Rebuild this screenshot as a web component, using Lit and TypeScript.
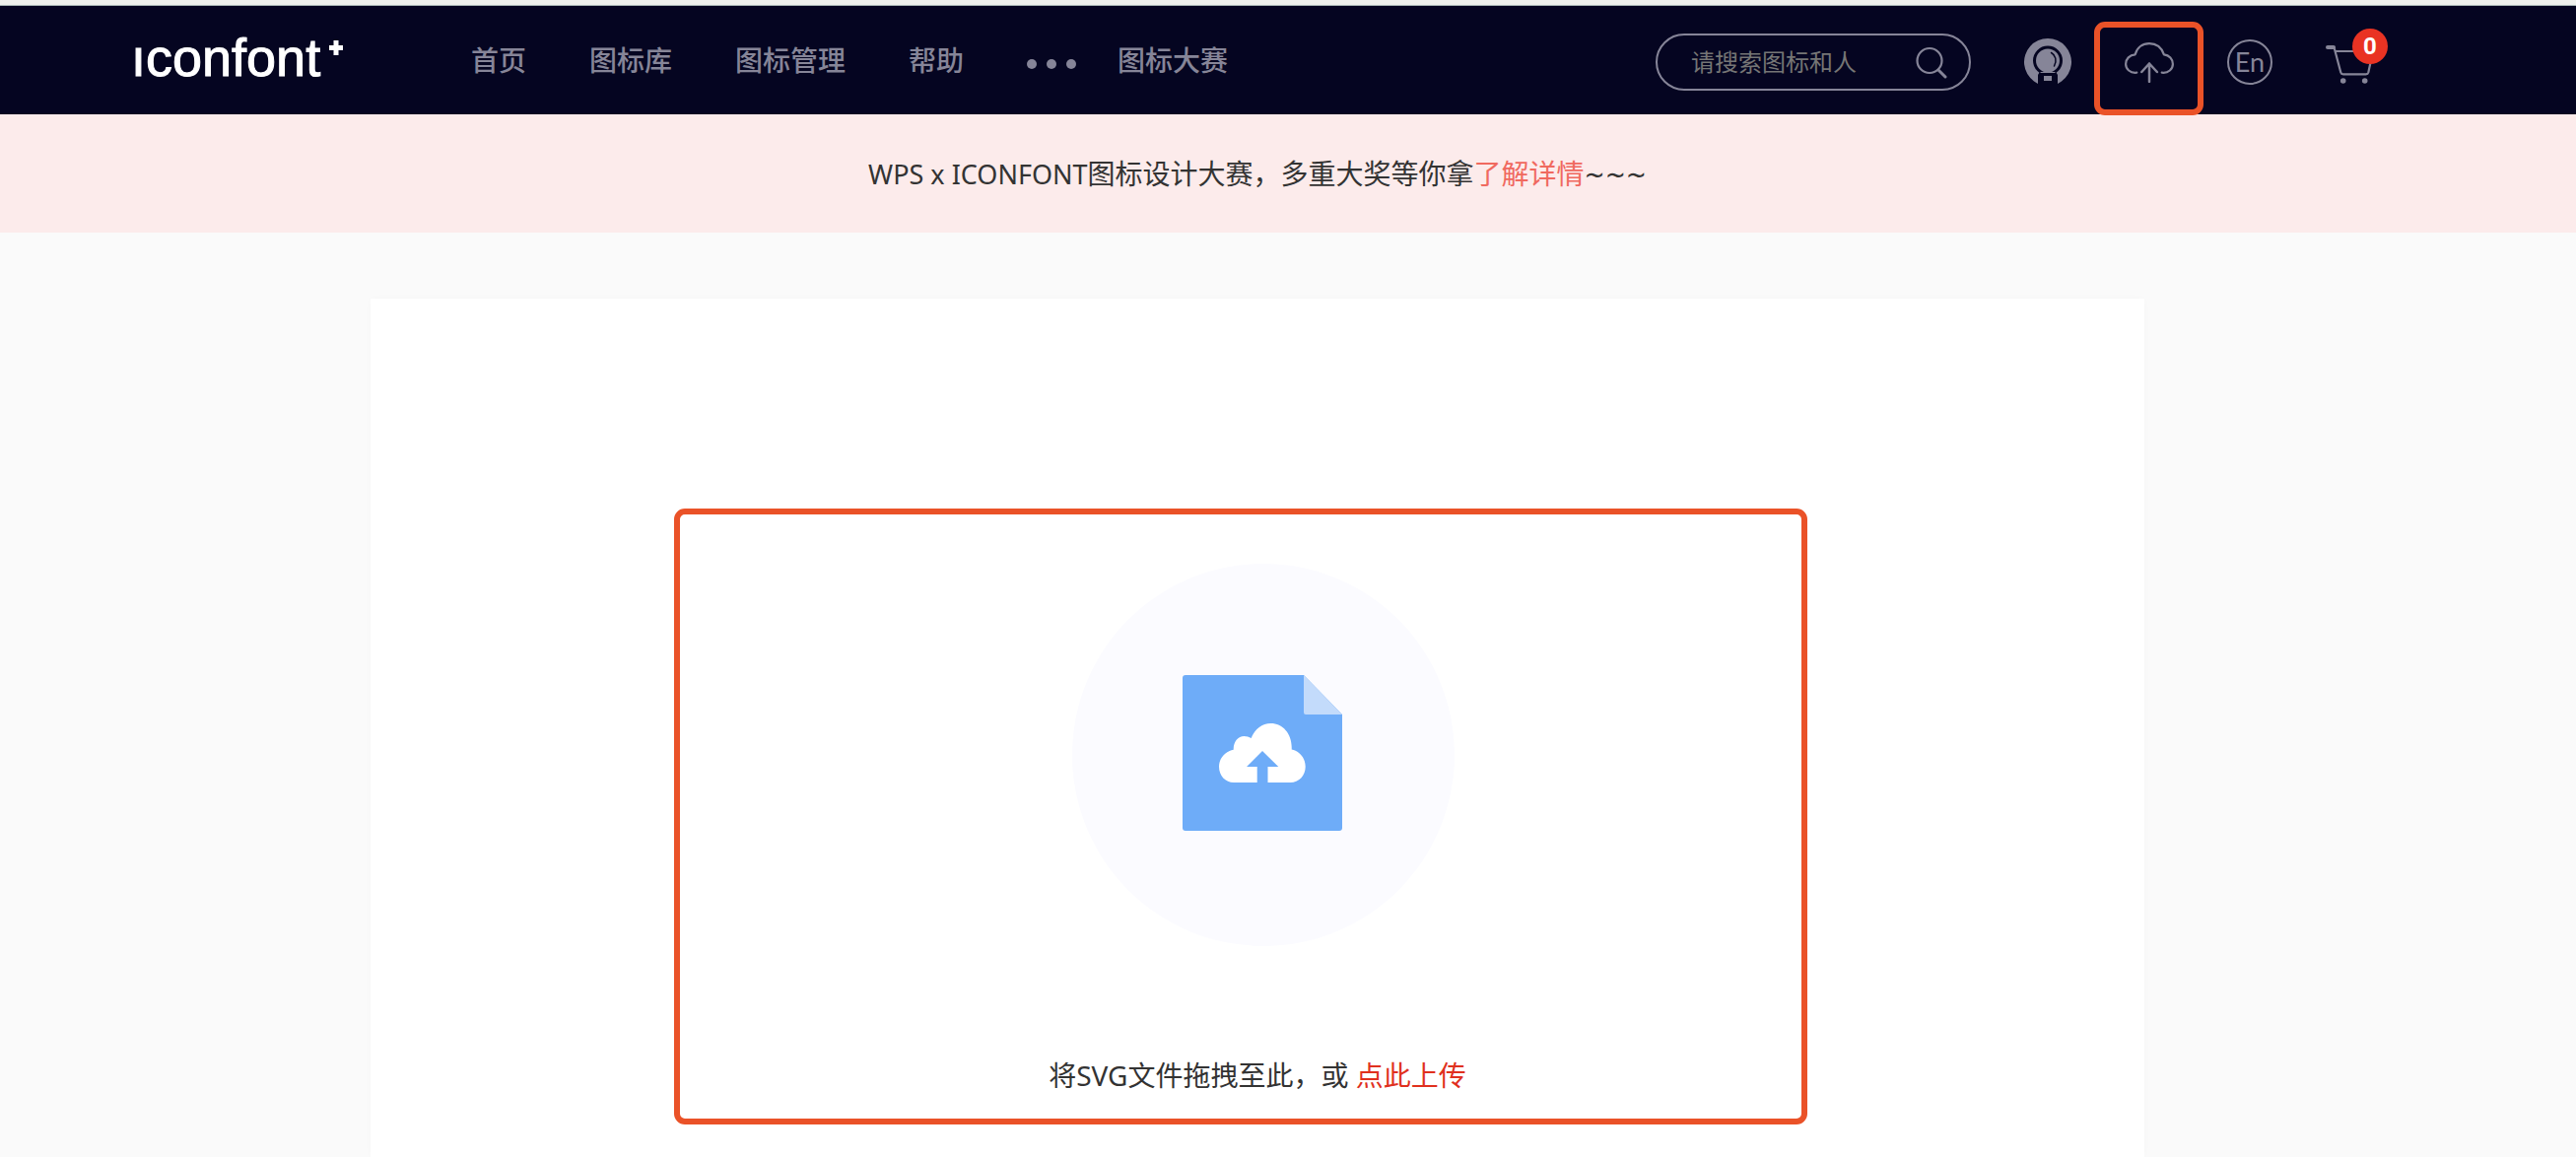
import { LitElement, html, css } from "lit";
import { customElement } from "lit/decorators.js";

@customElement("site-header")
class SiteHeader extends LitElement {
  static styles = css`
    :host {
      display: block;
      background: #050521;
      border-top: 5px solid #eff1ed;
      font-family: "Noto Sans", "Noto Sans CJK SC", sans-serif;
      color: #868598;
    }
    .bar {
      display: flex;
      align-items: center;
      height: 110px;
      padding: 0 190px 0 133px;
      border-top: 1px solid #a9b8b6;
    }
    a,
    button {
      color: inherit;
      text-decoration: none;
      font: inherit;
    }
    button {
      display: block;
      padding: 0;
      border: 0;
      background: none;
      cursor: pointer;
    }
    svg {
      display: block;
      fill: none;
      stroke: currentColor;
      stroke-linecap: round;
      stroke-linejoin: round;
    }
    .logo {
      display: flex;
      gap: 9px;
      flex: 0 0 345px;
      padding-bottom: 6px;
      color: #fff;
      font: 54px/60px "Liberation Sans", sans-serif;
      -webkit-text-stroke: 1px #fff;
    }
    .plus {
      margin-top: 13px;
    }
    .nav,
    .more {
      display: flex;
      align-items: center;
      white-space: nowrap;
    }
    .nav {
      gap: 64px;
      font-size: 28px;
      line-height: 40px;
      font-weight: 500;
    }
    .more {
      gap: 42px;
    }
    .dots {
      padding-top: 8px;
    }
    .dots svg {
      fill: currentColor;
      stroke: none;
    }
    .tools {
      display: flex;
      align-items: center;
      gap: 54px;
      margin-left: auto;
      padding-top: 4px;
    }
    .search {
      display: flex;
      align-items: center;
      box-sizing: border-box;
      width: 320px;
      height: 58px;
      padding: 0 22px 0 34px;
      border: 2px solid #868598;
      border-radius: 29px;
    }
    .field {
      flex: 1;
      min-width: 0;
      padding: 0;
      border: 0;
      outline: 0;
      background: none;
      color: #fff;
      font: inherit;
      font-size: 24px;
      line-height: 36px;
    }
    .field::placeholder {
      color: #757575;
      opacity: 1;
    }
    .upload,
    .cart {
      position: relative;
    }
    .mark {
      position: absolute;
      inset: -21px -30px -33px -31px;
      border: 6px solid #ea5228;
      border-radius: 11px;
    }
    .lang {
      box-sizing: border-box;
      width: 46px;
      height: 46px;
      border: 2px solid #868598;
      border-radius: 50%;
      font: 27px/42px Lato, sans-serif;
      text-align: center;
    }
    .count {
      position: absolute;
      top: 0;
      left: 27px;
      width: 36px;
      height: 36px;
      border-radius: 50%;
      background: #e93323;
      color: #fff;
      font: 700 24px/36px Roboto, sans-serif;
      text-align: center;
    }
  `;

  render() {
    return html`
      <header class="bar">
        <a class="logo" href="#" aria-label="iconfont+">
          <span>ıconfont</span>
          <svg class="plus" width="14" height="15" viewBox="0 0 14 15">
            <path d="M4.500 0h5v5h4.500v5H9.500v5h-5v-5H0V5h4.500z" fill="#fff" stroke="none" />
          </svg>
        </a>
        <nav class="nav">
          <a href="#">首页</a>
          <a href="#">图标库</a>
          <a href="#">图标管理</a>
          <a href="#">帮助</a>
          <div class="more">
            <button class="dots" aria-label="更多">
              <svg width="50" height="12" viewBox="0 0 50 12">
                <circle cx="5" cy="6" r="5" />
                <circle cx="25" cy="6" r="5" />
                <circle cx="45" cy="6" r="5" />
              </svg>
            </button>
            <a href="#">图标大赛</a>
          </div>
        </nav>
        <div class="tools">
          <form class="search" role="search">
            <input class="field" type="text" placeholder="请搜索图标和人" aria-label="请搜索图标和人" />
            <button type="button" aria-label="搜索">
              <svg width="33" height="33" viewBox="0 0 33 33" stroke-width="2.200">
                <circle cx="15" cy="14.500" r="12.500" />
                <path d="M24 24l7 7" stroke-width="3" />
              </svg>
            </button>
          </form>
          <a href="#" aria-label="个人中心">
            <svg width="48" height="48" viewBox="0 0 48 48">
              <path
                d="M10 43.500A24 24 0 1 1 38 43.500L34 46V37l-1.500-2.500h-17L14 37v9z"
                fill="currentColor"
                stroke="none"
              />
              <circle cx="24" cy="22.500" r="15" fill="#050521" stroke="none" />
              <circle cx="24" cy="22.500" r="12" fill="currentColor" stroke="none" />
              <path d="M27.500 14.500c4.500 2.500 6 8 3 13.500" stroke="#050521" stroke-width="1.500" />
              <path d="M17 34.500h14" stroke="currentColor" stroke-width="1.200" />
              <path d="M20 38h8v5h-8z" fill="currentColor" stroke="none" />
            </svg>
          </a>
          <a class="upload" href="#" aria-label="上传">
            <svg width="50" height="41" viewBox="0 0 50 41" stroke-width="2.200">
              <path d="M12.300 30.700C5.500 31.500 1.100 27 1.100 22c0-5.200 3.900-9.200 9.600-9.700C12.500 5.500 18 1.200 25 1.200s12.500 4.300 14.900 11.100c5.300.600 9 4.500 9 9.700 0 5-4.400 9.500-11.200 8.700" />
              <path d="M25 40V21.500M17.300 30L25 21.500l7.900 8.500" stroke-width="2.500" />
            </svg>
            <span class="mark"></span>
          </a>
          <button class="lang">En</button>
          <a class="cart" href="#" aria-label="购物车">
            <svg width="64" height="68" viewBox="0 0 64 68" stroke-width="2.200">
              <path d="M2 19h6" stroke-width="4" />
              <path d="M8.500 19l6.800 25.500q.500 1.800 2.500 1.800h23q2 0 2.500-1.800L48 23M10 23h38" />
              <circle cx="17.700" cy="53" r="2.800" fill="currentColor" stroke="none" />
              <circle cx="39.700" cy="53" r="2.800" fill="currentColor" stroke="none" />
            </svg>
            <span class="count">0</span>
          </a>
        </div>
      </header>
    `;
  }
}

@customElement("upload-card")
class UploadCard extends LitElement {
  static styles = css`
    :host {
      display: block;
      position: relative;
      box-sizing: border-box;
      width: 100%;
      max-width: 1800px;
      padding: 268px 0 40px;
      background: #fff;
      box-shadow: 0 0 8px rgba(0, 0, 0, 0.02);
      color: #333;
      font: 28px/40px "Noto Sans", "Noto Sans CJK SC", sans-serif;
    }
    .drop {
      display: flex;
      flex-direction: column;
      align-items: center;
      gap: 110px;
    }
    .hint {
      margin: 0;
    }
    .pick {
      color: #e0301e;
      text-decoration: none;
    }
    .mark {
      position: absolute;
      top: 213px;
      left: 308px;
      right: 342px;
      height: 613px;
      border: 6px solid #ea5228;
      border-radius: 11px;
      pointer-events: none;
    }
  `;

  render() {
    return html`
      <section class="drop">
        <svg width="402" height="390" viewBox="0 0 402 390" aria-hidden="true">
          <circle cx="207" cy="195" r="194" fill="#fbfbff" />
          <path d="M128 114h120l39 40v115a3 3 0 0 1-3 3H128a3 3 0 0 1-3-3V117a3 3 0 0 1 3-3z" fill="#6eacf8" />
          <path d="M248 114l39 40h-37a2 2 0 0 1-2-2z" fill="#c3dbfb" />
          <path
            d="M177 223c-8.500 0-15-7-15-16 0-8.500 6-15.500 14.700-17.300C176.500 182 181 176 187.500 176c2.500 0 5 .700 7.200 2C198 169 205.500 163 214.500 163c12.500 0 22 11 21.200 26.500C243.500 191 249.700 198 249.700 207c0 9-6.700 16-15.200 16h-23v-16h10.800L206 191l-16 16h10.700v16z"
            fill="#fff"
          />
        </svg>
        <p class="hint">将SVG文件拖拽至此，或 <a class="pick" href="#">点此上传</a></p>
      </section>
      <span class="mark"></span>
    `;
  }
}

@customElement("app-root")
class AppRoot extends LitElement {
  static styles = css`
    :host {
      display: flex;
      flex-direction: column;
      min-height: 100vh;
      background: #fafafa;
    }
    .notice {
      box-sizing: border-box;
      height: 120px;
      margin: 0;
      padding: 40px 62px 40px 0;
      background: #fcebeb;
      color: #333;
      font: 28px/40px "Noto Sans", "Noto Sans CJK SC", sans-serif;
      text-align: center;
    }
    .latin {
      font-size: 27px;
    }
    .waves {
      font-family: "DejaVu Sans Condensed", "DejaVu Sans", sans-serif;
      font-stretch: normal;
    }
    .details {
      color: #f0695f;
      text-decoration: none;
    }
    .main {
      display: flex;
      flex: 1;
      justify-content: center;
      padding: 67px 62px 0 0;
    }
  `;

  render() {
    return html`
      <site-header></site-header>
      <p class="notice">
        <span class="latin">WPS x ICONFONT</span>图标设计大赛，多重大奖等你拿<a class="details" href="#">了解详情</a
        ><span class="waves">~~~</span>
      </p>
      <main class="main"><upload-card></upload-card></main>
    `;
  }
}
